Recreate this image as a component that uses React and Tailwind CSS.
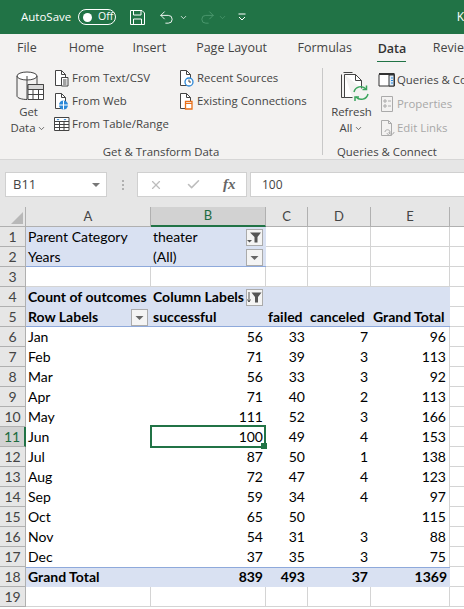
import { ChevronDown, Undo2, Redo2, X, Check } from "lucide-react";

const rows = [
  ["Jan", 56, 33, 7, 96],
  ["Feb", 71, 39, 3, 113],
  ["Mar", 56, 33, 3, 92],
  ["Apr", 71, 40, 2, 113],
  ["May", 111, 52, 3, 166],
  ["Jun", 100, 49, 4, 153],
  ["Jul", 87, 50, 1, 138],
  ["Aug", 72, 47, 4, 123],
  ["Sep", 59, 34, 4, 97],
  ["Oct", 65, 50, "", 115],
  ["Nov", 54, 31, 3, 88],
  ["Dec", 37, 35, 3, 75],
];

const tabs = [
  ["File", "w-[51px] pl-[17px]"],
  ["Home", "w-[64px] pl-[18px]"],
  ["Insert", "w-[63px] pl-[18px]"],
  ["Page Layout", "w-[108px] pl-[19px]"],
  ["Formulas", "w-[76px] pl-[13px]"],
];

function DocIcon({ children }) {
  return (
    <svg width="18" height="18" viewBox="0 0 18 18" fill="none" className="shrink-0">
      <path d="M2.500 1.500h6l4 4v11h-10z" fill="#fff" stroke="#444" />
      <path d="M8.500 1.500v4h4" stroke="#444" />
      {children}
    </svg>
  );
}

function SmallButton({ icon, label, muted, tall }) {
  return (
    <div className={`flex items-center gap-[1px] text-[11.4px] ${tall ? "h-[24px]" : "h-[23px]"} ${muted ? "text-[#a8a8a8]" : "text-[#444]"}`}>
      {icon}
      <span className="whitespace-nowrap">{label}</span>
    </div>
  );
}

function RowHead({ n, active }) {
  return (
    <div
      className={`flex h-5 items-center justify-center border-b border-b-[#b0b0b0] text-[14px] ${
        active
          ? "border-r-2 border-r-[#217346] bg-[#d2d2d2] text-[#1e6b40]"
          : "border-r border-r-[#b0b0b0] bg-[#e6e6e6] text-[#444]"
      }`}
    >
      {n}
    </div>
  );
}

function Cell({ children, className = "" }) {
  return <div className={`flex h-5 items-center whitespace-nowrap pr-[3px] pb-[2px] pl-[2px] text-[14px] text-black ${className}`}>{children}</div>;
}

function Blank({ className = "" }) {
  return <div className={`h-5 border-r border-b border-[#d4d4d4] bg-white ${className}`} />;
}

function FilterBtn({ kind }) {
  return (
    <span className="mt-[2px] ml-auto flex h-[17px] w-[17px] shrink-0 items-center justify-center border border-[#ababab] bg-[#f4f4f4]">
      <svg width="15" height="13" viewBox="0 0 15 13">
        {kind === "arrow" && <path d="M3.500 5h8l-4 4z" fill="#666" />}
        {kind === "filter" && (
          <>
            <path d="M3 1.500h11L10.500 6v5.500h-3V6z" fill="#555" />
            <path d="M0 9h5l-2.500 2.500z" fill="#555" />
          </>
        )}
        {kind === "sort" && (
          <>
            <path d="M4.500 1.500h10L11 6v5.500H8V6z" fill="#555" />
            <path d="M2 1v10M0.500 8.500L2 11l1.500-2.500" stroke="#555" fill="none" />
          </>
        )}
      </svg>
    </span>
  );
}

export default function App() {
  const font = { fontFamily: '"Open Sans", "Noto Sans", sans-serif' };
  const blue = "bg-[#d9e1f2]";
  const blueEnd = "bg-[#d9e1f2] shadow-[inset_0_-1px_0_#8ea9db]";
  const blueTop = "bg-[#d9e1f2] font-bold shadow-[inset_0_1px_0_#8ea9db]";
  return (
    <div className="flex h-[609px] w-[464px] flex-col overflow-hidden bg-[#e6e6e6]" style={font}>
      {/* title bar */}
      <div className="flex h-[34px] shrink-0 items-center bg-[#217346] pl-[21px] text-white">
        <span className="w-[50px] text-[11.5px]">AutoSave</span>
        <span className="ml-[7px] flex h-[16px] w-[38px] items-center rounded-full border border-white pl-[4px]">
          <span className="h-[9px] w-[9px] rounded-full bg-white" />
          <span className="ml-[6px] text-[10.5px]">Off</span>
        </span>
        <svg width="17" height="17" viewBox="0 0 17 17" fill="none" stroke="#fff" className="ml-[13px]">
          <path d="M1.500 1.500h11.500l2.500 2.500v11.500h-14z" />
          <path d="M4.500 1.500v4.500h7.500v-4.500M4.500 15.500v-5.500h8v5.500" />
        </svg>
        <Undo2 size={17} strokeWidth={1.3} className="ml-[12px]" />
        <ChevronDown size={9} strokeWidth={2} className="ml-[4px]" />
        <Redo2 size={17} strokeWidth={1.3} className="ml-[11px] text-[#4d9a70]" />
        <ChevronDown size={9} strokeWidth={2} className="ml-[2px] text-[#4d9a70]" />
        <svg width="8" height="8" viewBox="0 0 8 8" fill="none" stroke="#fff" className="ml-[11px]">
          <path d="M0.500 1h7M1 4l3 3 3-3" />
        </svg>
        <span className="ml-auto text-[12px]">K</span>
      </div>

      {/* tabs */}
      <div className="flex h-[28px] shrink-0 bg-[#f3f2f1] text-[12.5px] text-[#444]">
        {tabs.map(([name, cls]) => (
          <div key={name} className={`flex h-full items-center whitespace-nowrap ${cls}`}>
            {name}
          </div>
        ))}
        <div className="ml-[17px] flex h-full w-[30px] flex-col items-center whitespace-nowrap">
          <span className="mt-[6px] font-semibold text-[#333]">Data</span>
          <span className="mt-[2px] h-[3px] w-[29px] bg-[#217346]" />
        </div>
        <div className="ml-[26px] flex h-full items-center whitespace-nowrap">Revie</div>
      </div>

      {/* ribbon */}
      <div className="flex h-[98px] shrink-0 overflow-hidden border-b border-[#d6d6d6] bg-[#f3f2f1]">
        <div className="flex w-[322px] shrink-0 flex-col">
          <div className="flex h-[83px] shrink-0">
            <div className="flex w-[53px] shrink-0 flex-col items-center pt-[9px] pl-[4px] text-[11.4px] leading-[16px] text-[#444]">
              <svg width="29" height="31" viewBox="0 0 29 31" fill="none" className="ml-[3px]">
                <ellipse cx="11" cy="5" rx="10" ry="4" fill="#fff" stroke="#444" />
                <path d="M1 5v20c0 2 5 3.500 10 3.500V5" stroke="#444" />
                <path d="M21 5v8" stroke="#444" />
                <path d="M12 13.500h15.500v15H12zM12 18.500h15.500M12 23.500h15.500M17 13.500v15M22.500 13.500v15" fill="#fff" stroke="#444" />
                <path d="M12 13.500h15.500v5H12z" fill="#d9d9d9" stroke="#444" />
              </svg>
              <span className="mt-[2px]">Get</span>
              <span className="flex items-center">
                Data
                <ChevronDown size={9} className="ml-[2px]" />
              </span>
            </div>
            <div className="flex w-[125px] shrink-0 flex-col pt-[4px]">
              <SmallButton
                label="From Text/CSV"
                icon={
                  <DocIcon>
                    <path d="M8.500 8.500h6.500v8.500h-6.500z" fill="#fff" stroke="#444" />
                    <path d="M10 11h3.500M10 13h3.500M10 15h3.500" stroke="#444" />
                  </DocIcon>
                }
              />
              <SmallButton
                label="From Web"
                icon={
                  <DocIcon>
                    <circle cx="10.500" cy="13" r="4.500" fill="#2b88d8" />
                    <path d="M6 13h9M10.500 8.500v9" stroke="#fff" />
                  </DocIcon>
                }
              />
              <SmallButton
                label="From Table/Range"
                icon={
                  <svg width="18" height="16" viewBox="0 0 18 16" fill="none" className="shrink-0">
                    <path d="M1.500 1.500h14.500v13h-14.500z" fill="#fff" stroke="#444" />
                    <path d="M1.500 5.500h14.500M1.500 8.500h14.500M1.500 11.500h14.500M6.500 5.500v9M11 5.500v9" stroke="#444" />
                    <path d="M3.500 3h3L5 4.500zM10.500 3h3L12 4.500z" fill="#2b88d8" />
                  </svg>
                }
              />
            </div>
            <div className="flex flex-col pt-[4px]">
              <SmallButton
                label="Recent Sources"
                icon={
                  <DocIcon>
                    <circle cx="11" cy="13" r="4" fill="#fff" stroke="#2b88d8" strokeWidth="1.300" />
                    <path d="M11 10.500V13h2" stroke="#444" />
                  </DocIcon>
                }
              />
              <SmallButton
                label="Existing Connections"
                icon={
                  <DocIcon>
                    <path d="M7.500 9.500h6.500v7.500h-6.500z" fill="#fff" stroke="#e8701a" strokeWidth="1.300" />
                    <path d="M7.500 11.500h6.500" stroke="#e8701a" />
                  </DocIcon>
                }
              />
            </div>
          </div>
          <div className="flex h-[14px] shrink-0 items-center justify-center text-[11.4px] text-[#444]">Get &amp; Transform Data</div>
        </div>
        <div className="mt-[6px] h-[87px] w-px shrink-0 bg-[#c8c8c8]" />
        <div className="flex min-w-0 flex-1 flex-col">
          <div className="flex h-[83px] shrink-0">
            <div className="flex w-[55px] shrink-0 flex-col items-center pt-[9px] pl-[2px] text-[11.4px] leading-[16px] text-[#444]">
              <svg width="29" height="31" viewBox="0 0 29 31" fill="none" className="ml-[6px]">
                <path d="M3.500 1.500h9M1.500 3.500v23h4" stroke="#444" />
                <path d="M4.500 3.500h11l6 6v8M4.500 3.500v23h8" fill="#fff" stroke="#444" />
                <path d="M15.500 3.500v6h6" stroke="#444" />
                <path d="M14 21a7 7 0 0 1 12-3M28 23a7 7 0 0 1-12 3" stroke="#3aa55d" strokeWidth="1.500" />
                <path d="M26.500 14.500v4h-4M15 30v-4h4" stroke="#3aa55d" strokeWidth="1.500" />
              </svg>
              <span className="mt-[2px]">Refresh</span>
              <span className="flex items-center">
                All
                <ChevronDown size={9} className="ml-[2px]" />
              </span>
            </div>
            <div className="flex flex-col pt-[6px]">
              <SmallButton
                tall
                label="Queries & Co"
                icon={
                  <svg width="18" height="16" viewBox="0 0 18 16" fill="none" className="shrink-0">
                    <path d="M1 2.500h15.500v11.500H1z" fill="#fff" stroke="#333" />
                    <path d="M1 2h15.500" stroke="#333" strokeWidth="2" />
                    <path d="M11 3v11h5V3z" fill="#deecf9" stroke="#333" />
                    <path d="M13 6h2M13 8.500h2M13 11h2" stroke="#2b88d8" />
                  </svg>
                }
              />
              <SmallButton
                tall
                muted
                label="Properties"
                icon={
                  <svg width="18" height="18" viewBox="0 0 18 18" fill="none" stroke="#aaa" className="shrink-0">
                    <path d="M3.500 1.500h11v15h-11zM6 5h2v2H6zM6 10h2v2H6zM10 6h3M10 11h3" />
                  </svg>
                }
              />
              <SmallButton
                tall
                muted
                label="Edit Links"
                icon={
                  <svg width="18" height="18" viewBox="0 0 18 18" fill="none" stroke="#aaa" className="shrink-0">
                    <path d="M3.500 1.500h7l3 3v12h-10zM10.500 1.500v3h3M7 13c0-3 5-3 5 0s-3 3-3 1M16 13c0 3-5 3-5 0" />
                  </svg>
                }
              />
            </div>
          </div>
          <div className="flex h-[14px] shrink-0 items-center whitespace-nowrap pl-[14px] text-[11.4px] text-[#444]">Queries &amp; Connect</div>
        </div>
      </div>

      {/* formula bar */}
      <div className="flex h-[47px] shrink-0 items-start pt-[12px]">
        <div className="ml-[5px] flex h-[25px] w-[102px] items-center justify-between border border-[#d0d0d0] bg-white pl-[7px] pr-[6px] text-[13px] text-[#444]">
          B11
          <span className="h-0 w-0 border-x-[4px] border-t-[4px] border-x-transparent border-t-[#777]" />
        </div>
        <div className="mt-[8px] mr-[13px] ml-[15px] flex flex-col gap-[2px]">
          <span className="h-[2px] w-[2px] bg-[#b0b0b0]" />
          <span className="h-[2px] w-[2px] bg-[#b0b0b0]" />
          <span className="h-[2px] w-[2px] bg-[#b0b0b0]" />
        </div>
        <div className="flex h-[25px] w-[110px] items-center border border-[#d0d0d0] bg-white pl-[11px] text-[#bdbdbd]">
          <X size={14} strokeWidth={2} />
          <Check size={15} strokeWidth={2.500} className="ml-[23px]" />
          <span className="ml-[22px] text-[15px] font-bold italic text-[#666]" style={{ fontFamily: '"Liberation Serif", serif' }}>
            fx
          </span>
        </div>
        <div className="ml-[3px] flex h-[25px] flex-1 items-center border-y border-l border-[#d0d0d0] bg-white pl-[11px] text-[12px] text-[#444]">100</div>
      </div>

      {/* sheet */}
      <div
        className="grid flex-1 grid-cols-[26px_125px_115px_42px_63px_79px_1fr] auto-rows-[20px] bg-white"
        style={{ fontFamily: 'Lato, "Open Sans", sans-serif' }}
      >
        <div className="flex h-5 items-end justify-end border-r border-b border-[#b0b0b0] bg-[#e6e6e6] p-[2px]">
          <span className="h-0 w-0 border-b-[12px] border-l-[12px] border-b-[#b8b8b8] border-l-transparent" />
        </div>
        {["A", "B", "C", "D", "E"].map((c) => (
          <div
            key={c}
            className={`flex h-5 items-center justify-center text-[13px] ${
              c === "B"
                ? "border-r border-b-2 border-r-[#b0b0b0] border-b-[#217346] bg-[#d2d2d2] text-[#1e6b40]"
                : "border-r border-b border-[#b0b0b0] bg-[#e6e6e6] text-[#444]"
            }`}
          >
            {c}
          </div>
        ))}
        <div className="h-5 border-b border-[#b0b0b0] bg-[#e6e6e6]" />

        {/* filters */}
        <RowHead n={1} />
        <Cell className={blue}>Parent Category</Cell>
        <Cell className={`${blue} pr-[1px]`}>theater<FilterBtn kind="filter" /></Cell>
        <Blank /><Blank /><Blank /><Blank className="border-r-0" />
        <RowHead n={2} />
        <Cell className={blueEnd}>Years</Cell>
        <Cell className={`${blueEnd} pr-[1px]`}>(All)<FilterBtn kind="arrow" /></Cell>
        <Blank /><Blank /><Blank /><Blank className="border-r-0" />
        <RowHead n={3} />
        <Blank /><Blank /><Blank /><Blank /><Blank /><Blank className="border-r-0" />

        {/* pivot header */}
        <RowHead n={4} />
        <Cell className={`${blue} font-bold`}>Count of outcomes</Cell>
        <Cell className={`${blue} pr-[1px] font-bold`}>Column Labels<FilterBtn kind="sort" /></Cell>
        <Cell className={blue} /><Cell className={blue} /><Cell className={blue} />
        <Blank className="border-r-0" />
        <RowHead n={5} />
        <Cell className={`${blueEnd} pr-[1px] font-bold`}>Row Labels<FilterBtn kind="arrow" /></Cell>
        <Cell className={`${blueEnd} font-bold`}>successful</Cell>
        <Cell className={`${blueEnd} font-bold`}>failed</Cell>
        <Cell className={`${blueEnd} font-bold`}>canceled</Cell>
        <Cell className={`${blueEnd} font-bold`}>Grand Total</Cell>
        <Blank className="border-r-0" />

        {/* data */}
        {rows.map(([month, s, f, c, t], i) => (
          <div key={month} className="contents">
            <RowHead n={i + 6} active={month === "Jun"} />
            <Cell>{month}</Cell>
            <Cell className="relative justify-end">
              {s}
              {month === "Jun" && (
                <span className="absolute -top-[2px] right-0 -bottom-px -left-px border-2 border-[#217346]">
                  <span className="absolute -right-[3px] -bottom-[3px] h-[6px] w-[6px] bg-[#217346]" />
                </span>
              )}
            </Cell>
            <Cell className="justify-end">{f}</Cell>
            <Cell className="justify-end">{c}</Cell>
            <Cell className="justify-end border-r border-r-[#d4d4d4]">{t}</Cell>
            <Blank className="border-r-0" />
          </div>
        ))}

        {/* totals */}
        <RowHead n={18} />
        <Cell className={blueTop}>Grand Total</Cell>
        <Cell className={`${blueTop} justify-end`}>839</Cell>
        <Cell className={`${blueTop} justify-end`}>493</Cell>
        <Cell className={`${blueTop} justify-end`}>37</Cell>
        <Cell className={`${blueTop} justify-end`}>1369</Cell>
        <Blank className="border-r-0" />
        <RowHead n={19} />
        <Blank /><Blank /><Blank /><Blank /><Blank /><Blank className="border-r-0" />
      </div>
    </div>
  );
}
